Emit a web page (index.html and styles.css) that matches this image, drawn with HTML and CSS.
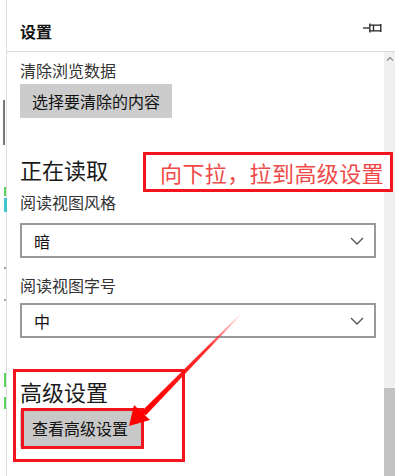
FILE: index.html
```html
<!DOCTYPE html>
<html lang="zh-CN">
<head>
<meta charset="utf-8">
<title>设置</title>
<link rel="stylesheet" href="styles.css">
</head>
<body>
<div class="window">
  <div class="edge">
    <span class="mark mark-dark"></span>
    <span class="mark mark-green"></span>
    <span class="mark mark-cyan"></span>
    <span class="mark mark-dot"></span>
    <span class="mark mark-dot2"></span>
    <span class="mark mark-green2"></span>
    <span class="mark mark-green3"></span>
  </div>
  <div class="panel">
    <header class="header">
      <h1 class="title">设置</h1>
      <svg class="pin" width="20" height="12" viewBox="0 0 20 12" fill="none" stroke="#222" stroke-width="1.3">
        <path d="M0 6H6.5"/>
        <path d="M6.8 1.5V10.5"/>
        <path d="M7 3.2H18 M7 8.8H18"/>
        <path d="M10.5 3.2V8.8"/>
        <path d="M17.8 2V10"/>
      </svg>
    </header>
    <div class="body">
      <div class="content">
        <div class="label first">清除浏览数据</div>
        <button class="btn btn-clear">选择要清除的内容</button>
        <h2 class="section reading">正在读取</h2>
        <div class="label l2">阅读视图风格</div>
        <div class="select s1">
          <span>暗</span>
          <svg class="chev" width="14" height="8" viewBox="0 0 14 8" fill="none" stroke="#555" stroke-width="1.3"><path d="M1 1L7 7L13 1"/></svg>
        </div>
        <div class="label l3">阅读视图字号</div>
        <div class="select s2">
          <span>中</span>
          <svg class="chev" width="14" height="8" viewBox="0 0 14 8" fill="none" stroke="#555" stroke-width="1.3"><path d="M1 1L7 7L13 1"/></svg>
        </div>
        <h2 class="section advanced">高级设置</h2>
        <button class="btn btn-adv">查看高级设置</button>
      </div>
      <div class="scrollbar">
        <svg class="caret" width="8" height="5" viewBox="0 0 8 5" fill="none" stroke="#8a8a8a" stroke-width="1.2"><path d="M1 4.5L4 1.5L7 4.5"/></svg>
        <div class="thumb"></div>
      </div>
    </div>
  </div>

  <div class="note note-text">向下拉，拉到高级设置</div>
  <div class="note note-box"></div>
  <div class="note note-btn"></div>
  <svg class="arrow" width="400" height="476" viewBox="0 0 400 476">
    <defs>
      <linearGradient id="fade" x1="241" y1="314" x2="150" y2="406" gradientUnits="userSpaceOnUse">
        <stop offset="0" stop-color="#ff3030" stop-opacity="0.05"/>
        <stop offset="0.35" stop-color="#ff1a1a" stop-opacity="0.9"/>
        <stop offset="1" stop-color="#ff0000"/>
      </linearGradient>
    </defs>
    <polygon points="241.4,314.4 240.6,313.6 141.4,411.4 145.6,415.6" fill="url(#fade)"/>
    <polygon points="129,426 134,405 150,420" fill="#ff0000"/>
  </svg>
</div>
</body>
</html>
```

FILE: styles.css
```css
html, body {
  margin: 0;
  padding: 0;
  background: #ffffff;
}

body {
  font-family: "Noto Sans CJK SC", "Noto Sans", sans-serif;
  color: #1a1a1a;
}

.window {
  position: relative;
  width: 400px;
  height: 476px;
  display: flex;
  overflow: hidden;
  background: #ffffff;
}

.edge {
  width: 6px;
  border-right: 1px solid #dedede;
  display: flex;
  flex-direction: column;
  align-items: flex-start;
  flex-shrink: 0;
}

.mark {
  display: block;
  margin-left: 3px;
  width: 2px;
}
.mark-dark { margin-top: 100px; height: 45px; background: #777; }
.mark-green { margin-top: 42px; height: 9px; background: #5bd35b; margin-left: 4px; }
.mark-cyan { margin-top: 2px; height: 14px; background: #3fc7cc; margin-left: 4px; width: 3px; }
.mark-dot { margin-top: 55px; height: 2px; background: #999; margin-left: 4px; }
.mark-dot2 { margin-top: 30px; height: 2px; background: #aaa; margin-left: 4px; }
.mark-green2 { margin-top: 72px; height: 14px; background: #5bd35b; margin-left: 4px; }
.mark-green3 { margin-top: 10px; height: 12px; background: #5bd35b; margin-left: 4px; }

.panel {
  width: 388px;
  display: flex;
  flex-direction: column;
}

.header {
  height: 52px;
  box-sizing: border-box;
  border-bottom: 1px solid #d9d9d9;
  padding: 21px 0 0 13px;
  display: flex;
  align-items: flex-start;
  justify-content: space-between;
}

.title {
  margin: 0;
  font-size: 16px;
  line-height: 20px;
  font-weight: 700;
  color: #111;
}

.pin {
  margin: 1px 12px 0 0;
}

.body {
  flex: 1;
  display: flex;
}

.content {
  flex: 1;
  padding: 8px 8px 0 13px;
  display: flex;
  flex-direction: column;
  align-items: flex-start;
}

.label {
  font-size: 16px;
  line-height: 20px;
  color: #333;
}
.l2 { margin-top: 9px; }
.l3 { margin-top: 17px; }

.btn {
  font-family: inherit;
  font-size: 16px;
  color: #111;
  background: #cccccc;
  border: 0;
  margin: 4px 0 0 0;
  height: 34px;
  padding: 0 12px;
  line-height: 34px;
}
.btn-adv {
  margin-top: 5px;
  height: 37px;
  line-height: 37px;
  padding: 0 14px 0 12px;
  background: #c8c8c8;
}

.section {
  margin: 0;
  font-size: 22px;
  line-height: 28px;
  font-weight: 400;
  color: #1a1a1a;
}
.reading { margin-top: 37px; }
.advanced { margin-top: 39px; }

.select {
  align-self: stretch;
  box-sizing: border-box;
  height: 35px;
  border: 2px solid #9a9a9a;
  margin-top: 11px;
  padding: 0 10px 0 12px;
  display: flex;
  align-items: center;
  justify-content: space-between;
  font-size: 16px;
  color: #111;
}
.s2 { margin-top: 8px; }

.scrollbar {
  width: 11px;
  background: #f0f0f0;
  display: flex;
  flex-direction: column;
  align-items: center;
}
.caret { margin-top: 4px; }
.thumb {
  margin-top: auto;
  width: 11px;
  height: 88px;
  background: #c2c2c2;
}

.note {
  position: absolute;
  box-sizing: border-box;
  border: 3px solid #f5141e;
}
.note-text {
  left: 143px;
  top: 152px;
  width: 250px;
  height: 40px;
  padding-left: 14px;
  display: flex;
  align-items: center;
  font-size: 22px;
  line-height: 28px;
  letter-spacing: 0.4px;
  color: #f04848;
  background: #ffffff;
  white-space: nowrap;
}
.note-box {
  left: 13px;
  top: 369px;
  width: 172px;
  height: 93px;
}
.note-btn {
  left: 21px;
  top: 408px;
  width: 123px;
  height: 41px;
}

.arrow {
  position: absolute;
  left: 0;
  top: 0;
  pointer-events: none;
}
```
